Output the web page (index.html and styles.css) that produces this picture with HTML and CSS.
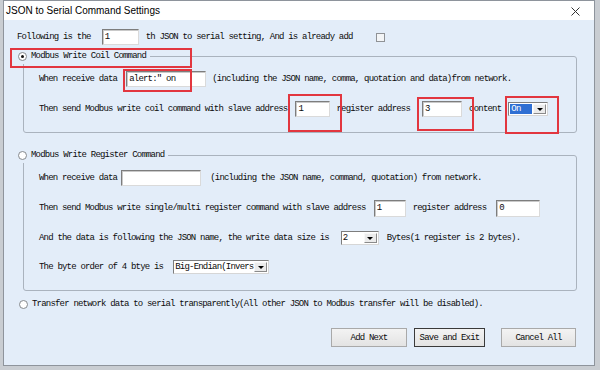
FILE: index.html
```html
<!DOCTYPE html>
<html lang="en">
  <head>
    <meta charset="UTF-8" />
    <title>JSON to Serial Command Settings</title>
    <link rel="stylesheet" href="styles.css">
  </head>
  <body>
    <div class="dialog">
      <div class="titlebar">
        <span class="title">JSON to Serial Command Settings</span>
        <svg class="close" width="9" height="9" viewBox="0 0 9 9">
          <path d="M0.5 0.5L8.5 8.5M8.5 0.5L0.5 8.5" stroke="#333" stroke-width="1" fill="none"/>
        </svg>
      </div>

      <div class="content">
        <div class="row">
          <span>Following is the</span>
          <input class="edit idx" type="text" value="1">
          <span class="after-idx">th JSON to serial setting, And is already add</span>
          <span class="check"></span>
        </div>

        <!-- coil command -->
        <fieldset class="group">
          <legend class="legend hl-legend"><span class="radio on"></span><span>Modbus Write Coil Command</span></legend>
          <div class="row">
            <span>When receive data</span>
            <span class="mark m-json"><input class="edit w80" type="text" value='alert:" on'></span>
            <span class="ml6">(including the JSON name, comma, quotation and data)from network.</span>
          </div>
          <div class="row">
            <span>Then send Modbus write coil command with slave address</span>
            <span class="mark m-slave"><input class="edit w35" type="text" value="1"></span>
            <span class="ml6">register address</span>
            <span class="mark m-reg"><input class="edit w40" type="text" value="3"></span>
            <span class="ml7">content</span>
            <span class="mark m-content">
              <span class="combo w40"><span class="combo-text sel">On</span><span class="combo-btn"></span></span>
            </span>
          </div>
        </fieldset>

        <!-- register command -->
        <fieldset class="group group2">
          <legend class="legend"><span class="radio"></span><span>Modbus Write Register Command</span></legend>
          <div class="row">
            <span>When receive data</span>
            <input class="edit w80 ml4" type="text" value="">
            <span class="ml9">(including the JSON name, command, quotation) from network.</span>
          </div>
          <div class="row">
            <span>Then send Modbus write single/multi register command with slave address</span>
            <input class="edit w32 ml8 h17" type="text" value="1">
            <span class="ml7">register address</span>
            <input class="edit w44 ml10 h17" type="text" value="0">
          </div>
          <div class="row">
            <span>And the data is following the JSON name, the write data size is</span>
            <span class="combo w38 ml12"><span class="combo-text">2</span><span class="combo-btn"></span></span>
            <span class="ml8">Bytes(1 register is 2 bytes).</span>
          </div>
          <div class="row r-order">
            <span>The byte order of 4 btye is</span>
            <span class="combo w96 ml10"><span class="combo-text">Big-Endian(Invers</span><span class="combo-btn"></span></span>
          </div>
        </fieldset>

        <div class="row transfer">
          <span class="radio"></span>
          <span>Transfer network data to serial transparently(All other JSON to Modbus transfer will be disabled).</span>
        </div>

        <div class="buttons">
          <button class="btn btn-add">Add Next</button>
          <button class="btn btn-save">Save and Exit</button>
          <button class="btn btn-cancel">Cancel All</button>
        </div>
      </div>
    </div>
  </body>
</html>
```

FILE: styles.css
```css
* {
  box-sizing: border-box;
}
html,
body {
  margin: 0;
}
body {
  background: #c9cdd2;
  font-family: "Liberation Mono", monospace;
  font-size: 9px;
  letter-spacing: -0.8px;
  color: #0c0c0c;
}
.dialog {
  width: 592px;
  height: 366px;
  margin-left: 3px;
  border: 1px solid #8e949c;
  background: #e3edf9;
  display: flex;
  flex-direction: column;
}
.titlebar {
  height: 19px;
  flex: none;
  background: #fff;
  display: flex;
  align-items: center;
  justify-content: space-between;
  padding: 0 14px 0 2px;
}
.title {
  font-family: "Liberation Sans", sans-serif;
  font-size: 10px;
  letter-spacing: 0;
  color: #000;
}
.close {
  margin-top: 2px;
}
.content {
  padding: 8px 17px 0 13px;
}
.row {
  display: flex;
  align-items: center;
  height: 18px;
  white-space: pre;
}
.after-idx {
  margin-left: 7px;
}
.check {
  width: 9px;
  height: 9px;
  margin-left: 23px;
  border: 1px solid #8f9296;
  background: #f3f5f7;
}

/* group boxes */
.group {
  margin: 2px 0 0 6px;
  padding: 6px 0 14px;
  border: 1px solid #aab3be;
  border-radius: 3px;
  min-width: 0;
}
.group2 {
  margin-top: 14px;
}
.group .row {
  padding-left: 15px;
}
.group .row + .row {
  margin-top: 12px;
}
.group .row.r-order {
  margin-top: 11px;
}
.legend {
  display: flex;
  align-items: center;
  gap: 4px;
  height: 16px;
  padding: 0 4px 0 0;
  margin-left: -6px;
  white-space: pre;
}
.hl-legend {
  position: relative;
}
.hl-legend::after {
  content: "";
  position: absolute;
  left: -8px;
  top: 0;
  width: 178px;
  height: 16px;
  border: 2px solid #e2363f;
}
.radio {
  width: 9px;
  height: 9px;
  flex: none;
  border-radius: 50%;
  border: 1px solid #85898e;
  background: #fff;
  display: flex;
  align-items: center;
  justify-content: center;
}
.radio.on::after {
  content: "";
  width: 3px;
  height: 3px;
  border-radius: 50%;
  background: #111;
}
.transfer {
  margin-top: 4px;
  padding-left: 2px;
  gap: 4px;
}

/* edit boxes and combos */
.edit {
  height: 16px;
  margin: 0;
  padding: 0 2px;
  border: 1px solid;
  border-color: #7d7d7d #dadada #dadada #7d7d7d;
  box-shadow: inset 1px 1px 0 #c9c9c9;
  background: #fff;
  font: inherit;
  letter-spacing: inherit;
  color: inherit;
  outline: none;
}
.idx {
  width: 37px;
  margin-left: 11px;
}
.h17 {
  height: 17px;
}
.w32 { width: 32px; }
.w35 { width: 35px; }
.w38 { width: 38px; }
.w40 { width: 40px; }
.w44 { width: 44px; }
.w80 { width: 80px; }
.w96 { width: 96px; }
.ml4 { margin-left: 4px; }
.ml6 { margin-left: 6px; }
.ml7 { margin-left: 7px; }
.ml8 { margin-left: 8px; }
.ml9 { margin-left: 9px; }
.ml10 { margin-left: 10px; }
.ml12 { margin-left: 12px; }

.combo {
  display: flex;
  height: 14px;
  padding: 1px;
  background: #fff;
  border: 1px solid;
  border-color: #7d7d7d #d6d6d6 #d6d6d6 #7d7d7d;
}
.combo-text {
  flex: 1;
  min-width: 0;
  line-height: 10px;
}
.combo-text.sel {
  background: #2f6fd3;
  color: #fff;
  margin-right: 1px;
  padding-left: 1px;
}
.combo-btn {
  width: 13px;
  flex: none;
  background: #ebebeb;
  border: 1px solid;
  border-color: #f8f8f8 #8a8a8a #8a8a8a #f8f8f8;
  display: flex;
  align-items: center;
  justify-content: center;
}
.combo-btn::after {
  content: "";
  border-top: 3px solid #000;
  border-left: 3px solid transparent;
  border-right: 3px solid transparent;
}

/* red annotation frames */
.mark {
  position: relative;
  display: flex;
}
.mark::after {
  content: "";
  position: absolute;
  border: 2px solid #e2363f;
}
.m-json {
  margin-left: 9px;
}
.m-json::after {
  left: -3px;
  top: -2px;
  width: 65px;
  height: 19px;
}
.m-slave {
  margin-left: 8px;
}
.m-slave::after {
  left: -7px;
  top: -7px;
  width: 50px;
  height: 34px;
}
.m-reg {
  margin-left: 12px;
}
.m-reg::after {
  left: -5px;
  top: -4px;
  width: 53px;
  height: 30px;
}
.m-content {
  margin-left: 7px;
}
.m-content::after {
  left: -3px;
  top: -6px;
  width: 50px;
  height: 34px;
}

/* buttons */
.buttons {
  display: flex;
  justify-content: flex-end;
  margin-top: 15px;
  padding-right: 1px;
}
.btn {
  height: 19px;
  padding: 0;
  border: 1px solid #a9a9a9;
  background: linear-gradient(#f3f3f3, #e3e3e3);
  font: inherit;
  letter-spacing: inherit;
  color: inherit;
}
.btn-add {
  width: 76px;
}
.btn-save {
  width: 71px;
  margin-left: 7px;
  border-color: #3a3a3a;
}
.btn-cancel {
  width: 75px;
  margin-left: 16px;
}
```
